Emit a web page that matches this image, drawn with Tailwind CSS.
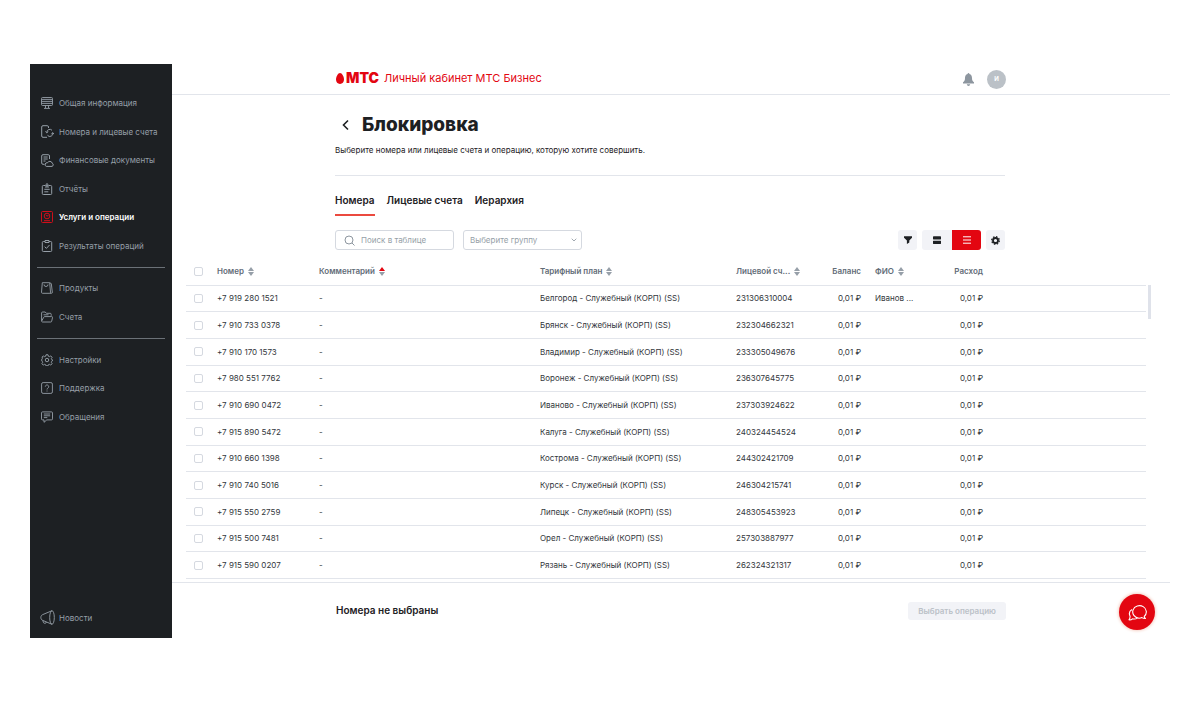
<!DOCTYPE html>
<html lang="ru">
<head>
<meta charset="utf-8">
<meta name="viewport" content="width=device-width, initial-scale=1">
<title>Блокировка</title>
<script src="https://cdn.jsdelivr.net/npm/@tailwindcss/browser@4"></script>
</head>
<body class="bg-white font-['Inter','Liberation_Sans',sans-serif] text-[8px] leading-3 text-[#1d2023]">
<div class="flex min-h-screen px-[30px] py-16">

  <aside class="flex w-[142px] shrink-0 flex-col bg-[#1d2023] px-[7px] pt-[25px] text-[#969fa8]">
    <nav class="flex flex-1 flex-col" aria-label="Основное меню">
      <div class="flex h-[171px] flex-col">
        <a href="#" class="flex flex-1 items-center gap-1.5 pl-1">
          <svg class="size-3" viewBox="0 0 12 12" fill="none" stroke="currentColor" stroke-width=".9"><rect x=".5" y=".5" width="11" height="8" rx="1"/><path d="M1 2.400h10M1 4.400h10M1 6.400h10M4.500 8.500v2.500M7.500 8.500v2.500M3 11.400h6"/></svg>Общая информация</a>
        <a href="#" class="flex flex-1 items-center gap-1.5 pl-1">
          <svg class="-mr-px size-[13px]" viewBox="0 0 13 13" fill="none" stroke="currentColor"><path d="M7.500 3V2A1.300 1.300 0 0 0 6.200.7H2A1.300 1.300 0 0 0 .7 2v9A1.300 1.300 0 0 0 2 12.300h4M5.800 7.200A3 3 0 0 1 11 5.300M11.800 7.800A3 3 0 0 1 6.500 10.300M4.400 6.500l1.400 1.300L7.300 6.500M10.300 9l1.500-1.300L13 9"/></svg>Номера и лицевые счета</a>
        <a href="#" class="flex flex-1 items-center gap-1.5 pl-1">
          <svg class="-mr-px size-[13px]" viewBox="0 0 13 13" fill="none" stroke="currentColor"><path d="M8.500 5V2A1.300 1.300 0 0 0 7.200.7H2A1.300 1.300 0 0 0 .7 2v7A1.300 1.300 0 0 0 2 10.300h1.500M2.500 3h4.200M2.500 5h4.200M2.500 7h2M5.300 12.400h5.700a1.700 1.700 0 0 0 .2-3.200A2.500 2.500 0 0 0 6.500 8.800a1.900 1.900 0 0 0-1.200 3.600z"/></svg>Финансовые документы</a>
        <a href="#" class="flex flex-1 items-center gap-1.5 pl-1">
          <svg class="size-3" viewBox="0 0 12 12" fill="none" stroke="currentColor"><path d="M4 2.500H2.300a1 1 0 0 0-1 1v7a1 1 0 0 0 1 1h7.400a1 1 0 0 0 1-1v-7a1 1 0 0 0-1-1H8M6 0v4M4 2.200h4M4 4h4M3.300 6.300h5.400M3.300 8.800h4"/></svg>Отчёты</a>
        <a href="#" aria-current="page" class="flex flex-1 items-center gap-1.5 pl-1 font-semibold text-white">
          <svg class="size-3 text-[#cf0f1a]" viewBox="0 0 12 12" fill="none" stroke="currentColor"><rect x=".5" y=".5" width="11" height="11" rx="1"/><circle cx="6" cy="5" r="2.800"/><path d="M4.800 4 6 5.200l1.500-.9M3 9.700h6"/></svg>Услуги и операции</a>
        <a href="#" class="flex flex-1 items-center gap-1.5 pl-1">
          <svg class="size-3" viewBox="0 0 12 12" fill="none" stroke="currentColor"><path d="M4 1.500H2.300a1 1 0 0 0-1 1v8a1 1 0 0 0 1 1h7.400a1 1 0 0 0 1-1v-8a1 1 0 0 0-1-1H8M4 .5h4v2H4zM3.700 6.700l1.700 1.700L8.500 5"/></svg>Результаты операций</a>
      </div>
      <hr class="mt-[7px] mb-[6px] border-[#6b7177]">
      <div class="flex h-[57px] flex-col">
        <a href="#" class="flex flex-1 items-center gap-1.5 pl-1">
          <svg class="size-3" viewBox="0 0 12 12" fill="none" stroke="currentColor" stroke-width=".9"><path d="M1.300.7h7.400L9.500 10.300a1 1 0 0 1-1 1h-7a1 1 0 0 1-1-1zM3 2.500a2 2 0 0 0 4 0M8.800.8l1.500.8 1 8.500a1 1 0 0 1-1 1.200H8.700"/></svg>Продукты</a>
        <a href="#" class="flex flex-1 items-center gap-1.5 pl-1">
          <svg class="size-3" viewBox="0 0 12 12" fill="none" stroke="currentColor" stroke-width=".9"><path d="M.6 9.800V2a1 1 0 0 1 1-1h2.600l1.200 1.300h3.800a1 1 0 0 1 1 1v1.500M1.700 11h8a1 1 0 0 0 1-.8l.8-3.500a.9.900 0 0 0-.9-1.100H3.700a1 1 0 0 0-1 .7L.7 10a.8.800 0 0 0 1 1M2.500 3.800h5"/></svg>Счета</a>
      </div>
      <hr class="my-[7px] border-[#6b7177]">
      <div class="flex h-[85px] flex-col">
        <a href="#" class="flex flex-1 items-center gap-1.5 pl-1">
          <svg class="size-3" viewBox="0 0 24 24" fill="none" stroke="currentColor" stroke-width="1.900" stroke-linejoin="round"><path d="M10 1.500h4l.7 3 2 .9 2.700-1.600 2.800 2.800-1.600 2.700.9 2 2 .7-2 2.700-.9 2 1.600 2.700-2.800 2.800-2.700-1.600-2 .9-.7 2.200h-4l-.7-2.200-2-.9-2.700 1.600-2.800-2.800 1.600-2.700-.9-2L1 12l1.500-2.700.9-2L1.800 6.600l2.800-2.800 2.700 1.600 2-.9z"/><circle cx="12" cy="12" r="3.500"/></svg>Настройки</a>
        <a href="#" class="flex flex-1 items-center gap-1.5 pl-1">
          <svg class="size-3" viewBox="0 0 12 12" fill="none" stroke="currentColor" stroke-width=".9"><rect x=".6" y=".6" width="10.800" height="10.800" rx="1.500"/><path d="M4.300 4.600a1.700 1.700 0 1 1 2.600 1.500Q6 6.600 6 7.500M6 8.500v1"/></svg>Поддержка</a>
        <a href="#" class="flex flex-1 items-center gap-1.5 pl-1">
          <svg class="size-3" viewBox="0 0 12 12" fill="none" stroke="currentColor" stroke-width=".9"><path d="M1.500.9h9a1 1 0 0 1 1 1v6a1 1 0 0 1-1 1H5.800L3 11.300V8.900H1.500a1 1 0 0 1-1-1v-6a1 1 0 0 1 1-1zM2.800 3h6.400M2.800 4.800h6.400M2.800 6.600h3.500"/></svg>Обращения</a>
      </div>
    </nav>
    <a href="#" class="mb-[13px] flex items-center gap-1 pl-[3px]">
      <svg class="size-[15px]" viewBox="0 0 15 15" fill="none" stroke="currentColor" stroke-width=".9"><ellipse cx="12" cy="7.500" rx="2.300" ry="6.800"/><path d="M12 .7 2.500 4.700C.3 5.700.3 9.300 2.500 10.300L12 14.300M2.800 10.500l.7 2.200c1 1 2.500.8 3-.7"/></svg>Новости</a>
  </aside>

  <main class="relative flex min-w-0 flex-1 flex-col">
    <header class="border-b border-[#e2e5eb]">
      <div class="mx-auto flex h-[30px] max-w-[670px] items-center">
        <a href="#" class="flex items-center pb-0.5 text-[#e30611]">
          <svg class="h-[11px] w-2" viewBox="0 0 8 11" fill="currentColor"><path d="M4 0C6 0 8 3.600 8 6.600 8 9.300 6.400 11 4 11S0 9.300 0 6.600C0 3.600 2 0 4 0z"/></svg>
          <span class="ml-0.5 text-[14px] font-black">МТС</span>
          <span class="ml-[5px] text-[11px]">Личный кабинет МТС Бизнес</span>
        </a>
        <button type="button" aria-label="Уведомления" class="mr-[13px] ml-auto text-[#8d969f]">
          <svg class="h-[13px] w-[11px]" viewBox="0 0 11 13" fill="currentColor"><path d="M5.500 0c.6 0 .9.400.9.900C8.300 1.400 9 3 9 5c0 2.200.5 3.200 2 4.300v1.200H0V9.300C1.500 8.200 2 7.200 2 5c0-2 .7-3.600 2.600-4.100 0-.5.300-.9.900-.9zM3.800 11.300h3.400C7 12.400 6.400 13 5.500 13s-1.500-.6-1.700-1.700z"/></svg>
        </button>
        <button type="button" class="size-[19px] rounded-full bg-[#bbc1c7] text-[6px] font-bold text-white">И</button>
      </div>
    </header>

    <div class="pr-0.5">
    <div class="mx-auto w-full max-w-[670px]">
      <div class="mt-[18px] flex h-6 items-center gap-3 pl-1.5">
        <button type="button" aria-label="Назад"><svg class="h-3 w-[9px]" viewBox="0 0 9 12" fill="none" stroke="currentColor" stroke-width="1.600"><path d="M7 1.500 2.500 6 7 10.500"/></svg></button>
        <h1 class="text-[19px] leading-6 font-extrabold">Блокировка</h1>
      </div>
      <p class="mt-[7px] border-b border-[#e2e5eb] pb-[19px]">Выберите номера или лицевые счета и операцию, которую хотите совершить.</p>
      <div role="tablist" class="mt-4 flex gap-3 text-[10px] leading-4 font-semibold">
        <button type="button" role="tab" aria-selected="true" class="border-b-2 border-[#eb4a3f] pb-[6px]">Номера</button>
        <button type="button" role="tab" aria-selected="false" class="border-b-2 border-transparent pb-[6px]">Лицевые счета</button>
        <button type="button" role="tab" aria-selected="false" class="border-b-2 border-transparent pb-[6px]">Иерархия</button>
      </div>
      <div class="mt-[14px] flex h-5 items-stretch">
        <label class="flex w-[119px] items-center gap-1.5 rounded-[3px] border border-[#d5d9e0] px-2">
          <svg class="size-[11px] shrink-0 text-[#8d969f]" viewBox="0 0 11 11" fill="none" stroke="currentColor"><circle cx="5" cy="5" r="4"/><path d="m8 8 2.500 2.500"/></svg>
          <input type="text" aria-label="Поиск в таблице" placeholder="Поиск в таблице" class="w-full min-w-0 outline-none placeholder:text-[#969fa8]">
        </label>
        <div class="relative ml-[9px] w-[119px]">
          <select aria-label="Выберите группу" class="h-full w-full appearance-none rounded-[3px] border border-[#d5d9e0] px-1.5 text-[#969fa8]"><option>Выберите группу</option></select>
          <svg class="pointer-events-none absolute top-2 right-[5px] h-1 w-1.5 text-[#969fa8]" viewBox="0 0 6 4" fill="none" stroke="currentColor" stroke-width=".9"><path d="m.7.7 2.300 2.300L5.300.7"/></svg>
        </div>
        <button type="button" aria-label="Фильтр" class="ml-auto grid w-[19px] place-items-center rounded-[3px] bg-[#f2f3f7]"><svg class="size-2" viewBox="0 0 8 8" fill="currentColor"><path d="M0 .3h8v1.500L5.300 4.500v2L2.900 8V4.500L0 1.800z"/></svg></button>
        <div class="ml-[5px] flex">
          <button type="button" aria-label="Карточки" class="grid w-[30px] place-items-center rounded-l-[3px] bg-[#f2f3f7]"><svg class="size-2" viewBox="0 0 8 8" fill="currentColor"><rect y=".3" width="8" height="3.200" rx=".4"/><rect y="4.700" width="8" height="3.200" rx=".4"/></svg></button>
          <button type="button" aria-label="Список" class="grid w-[29px] place-items-center rounded-r-[3px] bg-[#e30611] text-white"><svg class="size-2" viewBox="0 0 8 8" stroke="currentColor"><path d="M0 .8h8M0 4h8M0 7.200h8"/></svg></button>
        </div>
        <button type="button" aria-label="Настройки таблицы" class="ml-[5px] grid w-[19px] place-items-center rounded-[3px] bg-[#f2f3f7]"><svg class="size-[9px]" viewBox="0 0 10 10" fill="none" stroke="currentColor"><circle cx="5" cy="5" r="2.800" stroke-width="2"/><circle cx="5" cy="5" r="4.200" stroke-width="1.500" stroke-dasharray="1.650 1.650"/></svg></button>
      </div>
    </div>
    </div>

    <div class="mt-2 flex flex-1 gap-0.5 pr-[19px] pl-[14px]">
      <table class="h-[321px] flex-1 table-fixed border-collapse self-start text-[#33373c]">
        <colgroup><col class="w-[31px]"><col class="w-[102px]"><col class="w-[221px]"><col class="w-[196px]"><col class="w-[83px]"><col class="w-[42px]"><col class="w-[79px]"><col class="w-[43px]"><col></colgroup>
        <thead>
          <tr class="h-[27px] border-b border-[#e2e5eb] text-left text-[#626c77] [&>th]:p-0 [&>th]:font-semibold">
            <th class="pl-2!"><input type="checkbox" aria-label="Выбрать все" class="block size-[9px] appearance-none rounded-[2px] border border-[#d5d9e0] checked:bg-[#e30611]"></th>
            <th><span class="flex items-center gap-1">Номер <svg class="h-[9px] w-1.5 text-[#969fa8]" viewBox="0 0 6 9" fill="currentColor"><path d="M3 0 6 4H0z"/><path d="M0 5h6L3 9z"/></svg></span></th>
            <th><span class="flex items-center gap-1">Комментарий <svg class="h-[9px] w-1.5 text-[#969fa8]" viewBox="0 0 6 9" fill="currentColor"><path class="text-[#e30611]" d="M3 0 6 4H0z"/><path d="M0 5h6L3 9z"/></svg></span></th>
            <th><span class="flex items-center gap-1">Тарифный план <svg class="h-[9px] w-1.5 text-[#969fa8]" viewBox="0 0 6 9" fill="currentColor"><path d="M3 0 6 4H0z"/><path d="M0 5h6L3 9z"/></svg></span></th>
            <th><span class="flex items-center gap-1">Лицевой сч... <svg class="h-[9px] w-1.5 text-[#969fa8]" viewBox="0 0 6 9" fill="currentColor"><path d="M3 0 6 4H0z"/><path d="M0 5h6L3 9z"/></svg></span></th>
            <th class="text-right">Баланс</th>
            <th class="pl-[14px]!"><span class="flex items-center gap-1">ФИО <svg class="h-[9px] w-1.5 text-[#969fa8]" viewBox="0 0 6 9" fill="currentColor"><path d="M3 0 6 4H0z"/><path d="M0 5h6L3 9z"/></svg></span></th>
            <th class="text-right">Расход</th>
            <th></th>
          </tr>
        </thead>
        <tbody id="rows"></tbody>
      </table>
      <div class="mt-[27px] h-[34px] w-[3px] bg-[#dfe2ea]"></div>
    </div>

    <footer class="border-t border-[#e2e5eb]">
      <div class="mx-auto flex h-[55px] max-w-[670px] items-center justify-between">
        <p class="pb-0.5 text-[10px] font-semibold">Номера не выбраны</p>
        <button type="button" disabled class="h-[18px] rounded-[3px] bg-[#f2f3f7] px-[10px] font-semibold text-[#bbc1c7]">Выбрать операцию</button>
      </div>
    </footer>

    <button type="button" aria-label="Чат" class="absolute right-[15px] bottom-2 grid size-9 place-items-center rounded-full bg-[#e30611] text-white shadow-[0_0_3px_1px_#f5cfc4]">
      <svg class="h-[17px] w-[19px]" viewBox="0 0 19 17" fill="none" stroke="currentColor" stroke-width="1.100" stroke-linejoin="round"><path d="M16.200 12.500A6.800 6.300 0 1 0 11 14.200c1 0 2-.2 2.900-.6.900.6 2 1 3.600.9-.8-.6-1.200-1.200-1.300-2zM4 5.500C1.500 7 .8 9.500 2 12c.2 1.300-.2 2.700-1 3.800 1.500.2 2.600-.2 3.500-1 1.700.5 3.500.2 5-.7"/></svg>
    </button>
  </main>
</div>

<script>
const rows = [
  ['+7 919 280 1521', 'Белгород', '231306310004', 'Иванов ...'],
  ['+7 910 733 0378', 'Брянск', '232304662321', ''],
  ['+7 910 170 1573', 'Владимир', '233305049676', ''],
  ['+7 980 551 7762', 'Воронеж', '236307645775', ''],
  ['+7 910 690 0472', 'Иваново', '237303924622', ''],
  ['+7 915 890 5472', 'Калуга', '240324454524', ''],
  ['+7 910 660 1398', 'Кострома', '244302421709', ''],
  ['+7 910 740 5016', 'Курск', '246304215741', ''],
  ['+7 915 550 2759', 'Липецк', '248305453923', ''],
  ['+7 915 500 7481', 'Орел', '257303887977', ''],
  ['+7 915 590 0207', 'Рязань', '262324321317', '']
];
document.getElementById('rows').innerHTML = rows.map(([phone, city, account, name]) => `
  <tr class="border-b border-[#e2e5eb] [&>td]:p-0">
    <td class="pl-2!"><input type="checkbox" aria-label="${phone}" class="block size-[9px] appearance-none rounded-[2px] border border-[#d5d9e0] checked:bg-[#e30611]"></td>
    <td>${phone}</td><td>-</td><td>${city} - Служебный (КОРП) (SS)</td><td>${account}</td>
    <td class="text-right">0,01 ₽</td><td class="pl-[14px]!">${name}</td><td class="text-right">0,01 ₽</td><td></td>
  </tr>`).join('');
</script>
</body>
</html>
